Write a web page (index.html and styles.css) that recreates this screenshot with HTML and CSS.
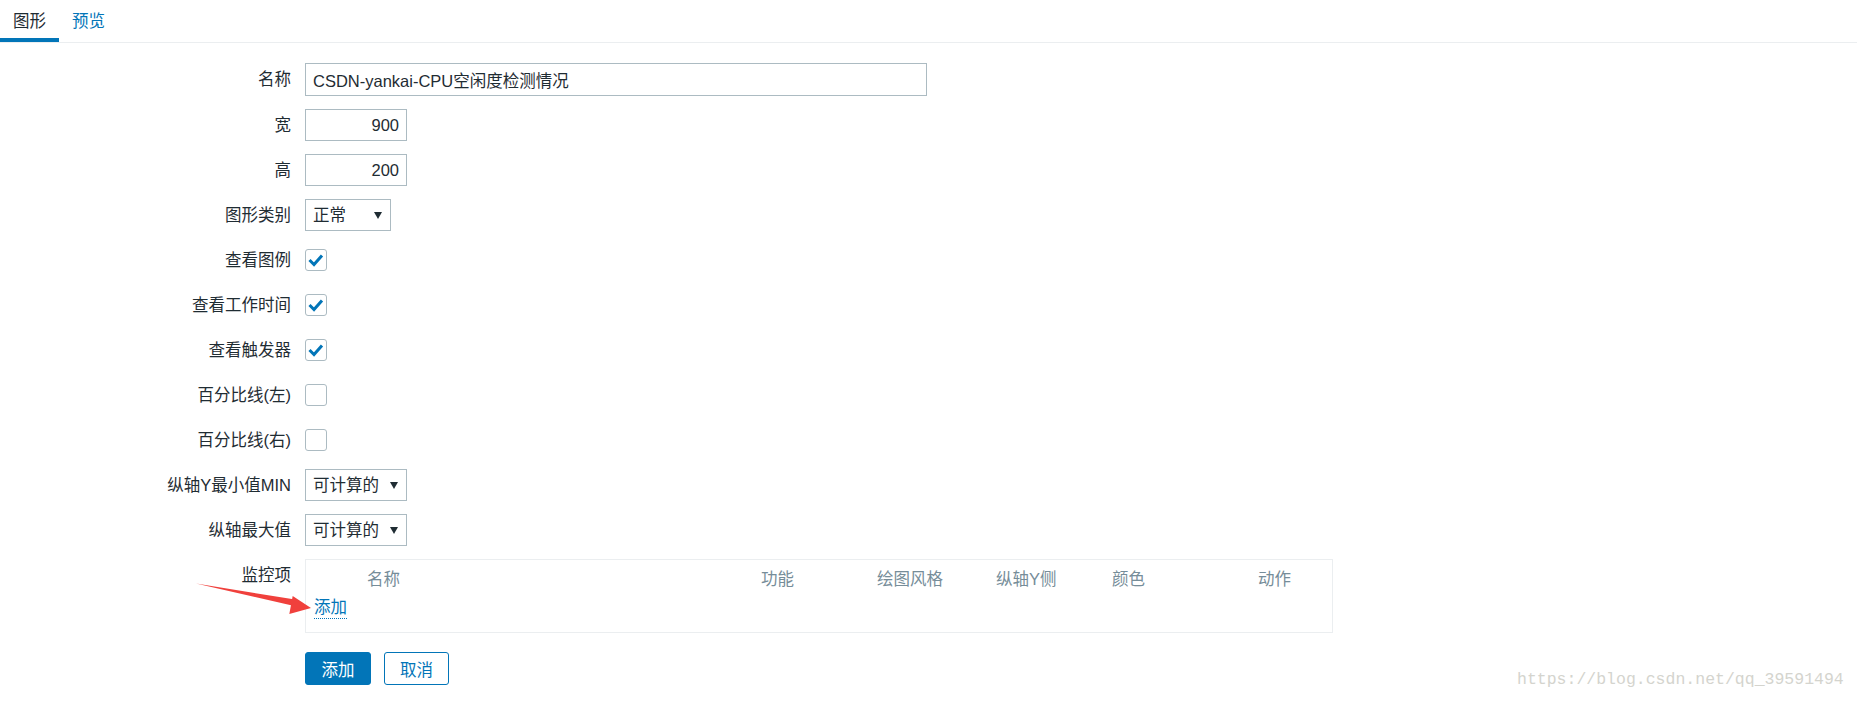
FILE: index.html
```html
<!DOCTYPE html>
<html lang="zh-CN">
<head>
    <meta charset="UTF-8">
    <title>图形</title>
    <link rel="stylesheet" href="styles.css">
</head>
<body>
    <nav class="tabs">
        <a class="tab active">图形</a>
        <a class="tab">预览</a>
    </nav>

    <form class="graph-form" action="javascript:void(0)">
        <label class="form-label">名称</label>
        <div class="form-field">
            <input type="text" class="text-input name-input" value="CSDN-yankai-CPU空闲度检测情况">
        </div>

        <label class="form-label">宽</label>
        <div class="form-field">
            <input type="text" class="text-input num-input" value="900">
        </div>

        <label class="form-label">高</label>
        <div class="form-field">
            <input type="text" class="text-input num-input" value="200">
        </div>

        <label class="form-label">图形类别</label>
        <div class="form-field">
            <div class="select select-type">正常
                <svg class="select-arrow" width="8" height="7" viewBox="0 0 8 7"><polygon points="0,0 8,0 4,7" fill="#1f2c33"/></svg>
            </div>
        </div>

        <label class="form-label">查看图例</label>
        <div class="form-field">
            <span class="checkbox"><svg width="20" height="20" viewBox="0 0 20 20"><polyline points="3.5,10 8,14.5 16,5.5" fill="none" stroke="#0275b8" stroke-width="3"/></svg></span>
        </div>

        <label class="form-label">查看工作时间</label>
        <div class="form-field">
            <span class="checkbox"><svg width="20" height="20" viewBox="0 0 20 20"><polyline points="3.5,10 8,14.5 16,5.5" fill="none" stroke="#0275b8" stroke-width="3"/></svg></span>
        </div>

        <label class="form-label">查看触发器</label>
        <div class="form-field">
            <span class="checkbox"><svg width="20" height="20" viewBox="0 0 20 20"><polyline points="3.5,10 8,14.5 16,5.5" fill="none" stroke="#0275b8" stroke-width="3"/></svg></span>
        </div>

        <label class="form-label">百分比线(左)</label>
        <div class="form-field">
            <span class="checkbox"></span>
        </div>

        <label class="form-label">百分比线(右)</label>
        <div class="form-field">
            <span class="checkbox"></span>
        </div>

        <label class="form-label">纵轴Y最小值MIN</label>
        <div class="form-field">
            <div class="select select-calc">可计算的
                <svg class="select-arrow" width="8" height="7" viewBox="0 0 8 7"><polygon points="0,0 8,0 4,7" fill="#1f2c33"/></svg>
            </div>
        </div>

        <label class="form-label">纵轴最大值</label>
        <div class="form-field">
            <div class="select select-calc">可计算的
                <svg class="select-arrow" width="8" height="7" viewBox="0 0 8 7"><polygon points="0,0 8,0 4,7" fill="#1f2c33"/></svg>
            </div>
        </div>

        <label class="form-label label-top">监控项</label>
        <div class="items-box">
            <div class="items-head">
                <span></span>
                <span>名称</span>
                <span>功能</span>
                <span>绘图风格</span>
                <span>纵轴Y侧</span>
                <span>颜色</span>
                <span>动作</span>
            </div>
            <a class="items-add">添加</a>
        </div>

        <span></span>
        <div class="form-buttons">
            <button type="button" class="btn btn-main">添加</button>
            <button type="button" class="btn btn-alt">取消</button>
        </div>
    </form>

    <!-- 截图上的标注箭头 -->
    <svg class="note-arrow" width="125" height="40" viewBox="0 0 125 40">
        <polygon points="6,5.5 106.6,21.8 105.4,28.2" fill="#f0403c"/>
        <polygon points="121,30 102.7,18 99.3,36" fill="#f0403c"/>
    </svg>

    <div class="watermark">https://blog.csdn.net/qq_39591494</div>
</body>
</html>
```

FILE: styles.css
```css
body {
    margin: 0;
    font-family: Arial, "Liberation Sans", "Noto Sans CJK SC", sans-serif;
    font-size: 16.5px;
    color: #1f2c33;
    background-color: white;
}
.tabs {
    display: flex;
    border-bottom: 1px solid #ebeef0;
}
.tab {
    display: block;
    height: 42px;
    box-sizing: border-box;
    padding: 4px 13px 0;
    line-height: 34px;
    border-bottom: 4px solid transparent;
    color: #0275b8;
}
.tab.active {
    color: #1f2c33;
    border-bottom-color: #0275b8;
}
.graph-form {
    display: grid;
    grid-template-columns: 291px 1fr;
    column-gap: 14px;
    row-gap: 13px;
    padding-top: 20px;
}
.form-label {
    text-align: right;
    line-height: 32px;
    white-space: nowrap;
}
.form-field {
    display: flex;
    align-items: center;
    min-height: 32px;
}
.text-input {
    height: 32px;
    box-sizing: border-box;
    border: 1px solid #acbbc2;
    padding: 0 7px;
    font: inherit;
    color: inherit;
    outline: none;
}
.name-input {
    width: 622px;
    height: 33px;
}
.num-input {
    width: 102px;
    text-align: right;
}
.select {
    position: relative;
    height: 32px;
    box-sizing: border-box;
    border: 1px solid #acbbc2;
    padding: 0 7px;
    line-height: 30px;
    display: flex;
    align-items: center;
    justify-content: space-between;
}
.select-type {
    width: 86px;
}
.select-calc {
    width: 102px;
}
.select-arrow {
    margin-right: 1px;
}
.checkbox {
    width: 22px;
    height: 22px;
    box-sizing: border-box;
    border: 1px solid #acbbc2;
    border-radius: 3px;
    display: flex;
    align-items: center;
    justify-content: center;
}
.label-top {
    align-self: start;
}
.items-box {
    width: 1028px;
    box-sizing: border-box;
    border: 1px solid #ebeef0;
    padding: 10px 8px 13px;
}
.items-head {
    display: grid;
    grid-template-columns: 53px 394px 116px 119px 116px 146px 1fr;
    line-height: 19px;
    color: #768d99;
}
.items-add {
    display: inline-block;
    margin-top: 9px;
    line-height: 19px;
    color: #0275b8;
    border-bottom: 1px dotted #0275b8;
    padding-bottom: 1px;
}
.form-buttons {
    display: flex;
    gap: 13px;
    margin-top: 6px;
}
.btn {
    height: 33px;
    box-sizing: border-box;
    padding: 0 12px;
    border-radius: 3px;
    font: inherit;
    cursor: pointer;
}
.btn-main {
    width: 66px;
    background-color: #0275b8;
    border: 1px solid #0275b8;
    color: white;
}
.btn-alt {
    width: 65px;
    background-color: white;
    border: 1px solid #0275b8;
    color: #0275b8;
}
.note-arrow {
    position: absolute;
    left: 190px;
    top: 578px;
}
.watermark {
    position: absolute;
    left: 1517px;
    top: 670px;
    font-family: "Liberation Mono", monospace;
    font-size: 16.5px;
    color: #d4d4ce;
}
```
